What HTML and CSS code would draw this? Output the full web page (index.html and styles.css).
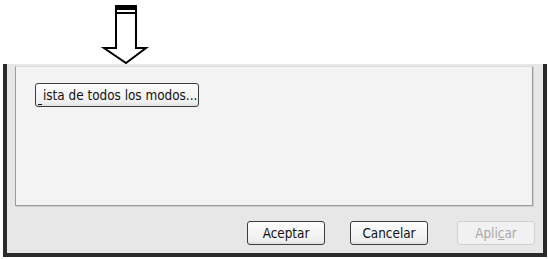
FILE: index.html
```html
<!DOCTYPE html>
<html>
<head>
<meta charset="utf-8">
<link rel="stylesheet" href="styles.css">
</head>
<body>
<div class="top">
  <svg class="arrow" width="50" height="64" viewBox="0 0 50 64">
    <path d="M16 6 V48 H4 L26 63 L46 48 H36 V6 Z" fill="#fff" stroke="#000" stroke-width="2" stroke-linejoin="miter"/>
    <rect x="16" y="5" width="20" height="5" fill="#000"/>
    <rect x="16" y="12" width="20" height="2" fill="#000"/>
  </svg>
</div>
<div class="window">
  <div class="panel">
    <button class="btn wide"><span class="mn"></span>ista de todos los modos...</button>
  </div>
  <div class="actions">
    <button class="btn">Aceptar</button>
    <button class="btn">Cancelar</button>
    <button class="btn disabled">Apli<u>c</u>ar</button>
  </div>
</div>
</body>
</html>
```
FILE: styles.css
```css
html, body {
  margin: 0;
  padding: 0;
  background: #fff;
  width: 548px;
  height: 259px;
  overflow: hidden;
  font-family: "DejaVu Sans Condensed", "DejaVu Sans", sans-serif;
  font-size: 13.4px;
}
.top {
  height: 64px;
}
.arrow {
  display: block;
  margin-left: 100px;
}
.window {
  margin-left: 3px;
  width: 536px;
  height: 189px;
  border: 4px solid #2a2a2a;
  border-top: none;
  background: #e7e7e7;
  display: flex;
  flex-direction: column;
}
.panel {
  margin: 2px 10px 0 8px;
  border: 1px solid #9c9c9c;
  border-top-color: #dcdcdc;
  background: #f3f3f3;
  box-shadow: 1px 1px 0 #cfcfcf;
  padding: 16px 0 0 19px;
  box-sizing: border-box;
  height: 140px;
}
.btn {
  font-family: "DejaVu Sans Condensed", "DejaVu Sans", sans-serif;
  font-size: 13.4px;
  color: #111;
  height: 24px;
  width: 78px;
  padding: 0;
  border: 1px solid #3c3c3c;
  border-radius: 3px;
  background: linear-gradient(#fdfdfd, #efefef 85%, #dedede);
  display: flex;
  align-items: center;
  justify-content: center;
}
.btn.wide {
  width: 164px;
  justify-content: flex-start;
  padding-left: 2px;
}
.mn {
  display: inline-block;
  width: 4px;
  height: 13px;
  border-bottom: 1px solid #111;
  margin-right: 1px;
  align-self: center;
  transform: translateY(3px);
}
.actions {
  display: flex;
  justify-content: flex-end;
  gap: 25px;
  margin-top: 15px;
  padding-right: 8px;
}
.btn.disabled {
  color: #a8a8a8;
  border-color: #cfcfcf;
  background: #f1f1f1;
  margin-left: 4px;
}
```
